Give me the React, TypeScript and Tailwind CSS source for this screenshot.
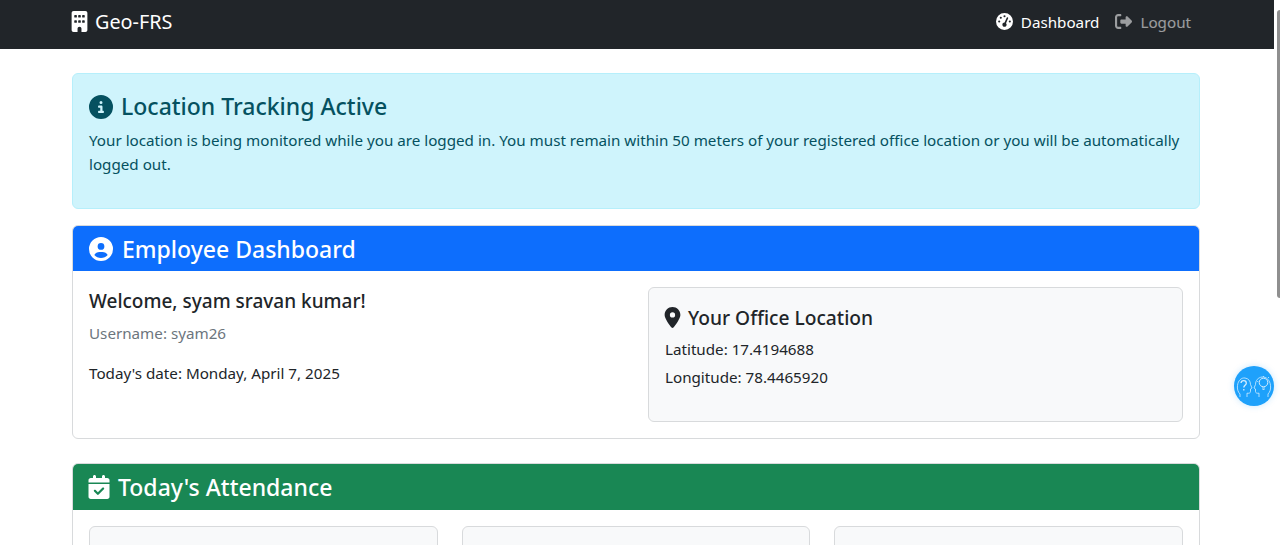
import { FaBuilding, FaGaugeHigh, FaRightFromBracket, FaCircleInfo, FaCircleUser, FaLocationDot, FaCalendarCheck } from "react-icons/fa6"

const font = { fontFamily: '"Noto Sans", "Open Sans", sans-serif' }

function HelpBubble() {
  return (
    <div className="fixed left-[1234px] top-[366px] w-10 h-10 rounded-full bg-[#1ea1fb] shadow-[0_0_6px_rgba(30,161,251,0.25)] flex items-center justify-center">
      <svg width="36" height="24" viewBox="0 0 36 24" fill="none" stroke="#d4edff" strokeWidth="0.8" strokeLinejoin="round">
        <path d="M4 23v-3C2 18 1 15 1.500 11.500 2 6.500 5.500 3.500 9 4c3.500.5 5.500 3 5.500 6.500L16 14l-1.500 1v2.500c0 1.500-1.500 2-3.500 1.700V23" />
        <path d="M32 23v-3c2-2 3-5 2.500-8.500C34 6.500 30.500 2.500 26 3c-4 .5-6.500 3.500-6.500 7.500L18 14l1.500 1v2.500c0 1.500 1.500 2 3.500 1.700V23" />
        <path d="M5 9c.3-3.200 5.300-3 5.300.2 0 2-2.500 2.300-2.500 4.300M7.800 15v1.400" strokeWidth="1.300" />
        <circle cx="27.500" cy="8.500" r="4.300" strokeWidth="1" />
        <path d="M26 14h3M26.500 15.500h2M22.200 7.500h-1M27.500 3V2M32 4l1-1" />
      </svg>
    </div>
  )
}

export default function App() {
  return (
    <div className="h-[545px] overflow-hidden bg-white text-[#212529] text-[15.2px] leading-6" style={font}>
      <div className="w-[1274px]">
        <nav className="h-[49px] bg-[#212529]">
          <div className="w-[1128px] ml-[72px] h-full flex items-center justify-between">
            <div className="flex items-center gap-[5px] text-white text-[19.8px] pb-1.5">
              <FaBuilding size={21} className="-ml-[3px]" />
              <span>Geo-FRS</span>
            </div>
            <div className="flex items-center gap-[16px] pr-[9px] pb-1.5">
              <div className="flex items-center gap-2 text-white">
                <FaGaugeHigh size={17} />
                <span>Dashboard</span>
              </div>
              <div className="flex items-center gap-2 text-white/55">
                <FaRightFromBracket size={17} />
                <span>Logout</span>
              </div>
            </div>
          </div>
        </nav>

        <main className="w-[1128px] ml-[72px] pt-6">
          <div className="h-[136px] rounded-md border border-[#b6effb] bg-[#cff4fc] text-[#055160] p-4">
            <h4 className="flex items-center gap-2 text-[23px] font-medium leading-[1.2] mt-[3px]">
              <FaCircleInfo size={24} />
              Location Tracking Active
            </h4>
            <p className="mt-[7px]">
              Your location is being monitored while you are logged in. You must remain within 50 meters of your registered office location or you will be automatically logged out.
            </p>
          </div>

          <section className="mt-4 h-[214px] rounded-md border border-[#d8dadc]">
            <div className="h-[45px] bg-[#0d6efd] rounded-t-[5px] text-white flex items-center gap-[9px] px-4 pt-px">
              <FaCircleUser size={24} />
              <h3 className="text-[23px] font-medium">Employee Dashboard</h3>
            </div>
            <div className="flex p-4 gap-6">
              <div className="w-[535px]">
                <h4 className="text-[19px] font-medium leading-[1.2] mt-[3px]">Welcome, syam sravan kumar!</h4>
                <p className="mt-2 text-[#6c757d]">Username: syam26</p>
                <p className="mt-4">Today's date: Monday, April 7, 2025</p>
              </div>
              <div className="flex-1 h-[135px] rounded-md border border-[#d8dadc] bg-[#f8f9fa] p-4">
                <h5 className="flex items-center gap-[5px] text-[19.2px] font-medium leading-[1.2] mt-0.5">
                  <FaLocationDot size={21} className="-ml-[3px]" />
                  Your Office Location
                </h5>
                <p className="mt-2">Latitude: 17.4194688</p>
                <p className="mt-1">Longitude: 78.4465920</p>
              </div>
            </div>
          </section>

          <section className="mt-6 rounded-md border border-[#d8dadc]">
            <div className="h-[46px] bg-[#198754] rounded-t-[5px] text-white flex items-center gap-[7px] px-4">
              <FaCalendarCheck size={24} className="-ml-[2px]" />
              <h3 className="text-[23px] font-medium">Today's Attendance</h3>
            </div>
            <div className="grid grid-cols-3 gap-6 p-4">
              <div className="h-[120px] rounded-md border border-[#d8dadc] bg-[#f8f9fa]" />
              <div className="h-[120px] rounded-md border border-[#d8dadc] bg-[#f8f9fa]" />
              <div className="h-[120px] rounded-md border border-[#d8dadc] bg-[#f8f9fa]" />
            </div>
          </section>
        </main>
      </div>
      <HelpBubble />
      {/* scrollbar thumb */}
      <div className="fixed left-[1277px] top-[10px] w-[3px] h-[288px] bg-[#8f8f8f] rounded-l-sm" />
    </div>
  )
}
